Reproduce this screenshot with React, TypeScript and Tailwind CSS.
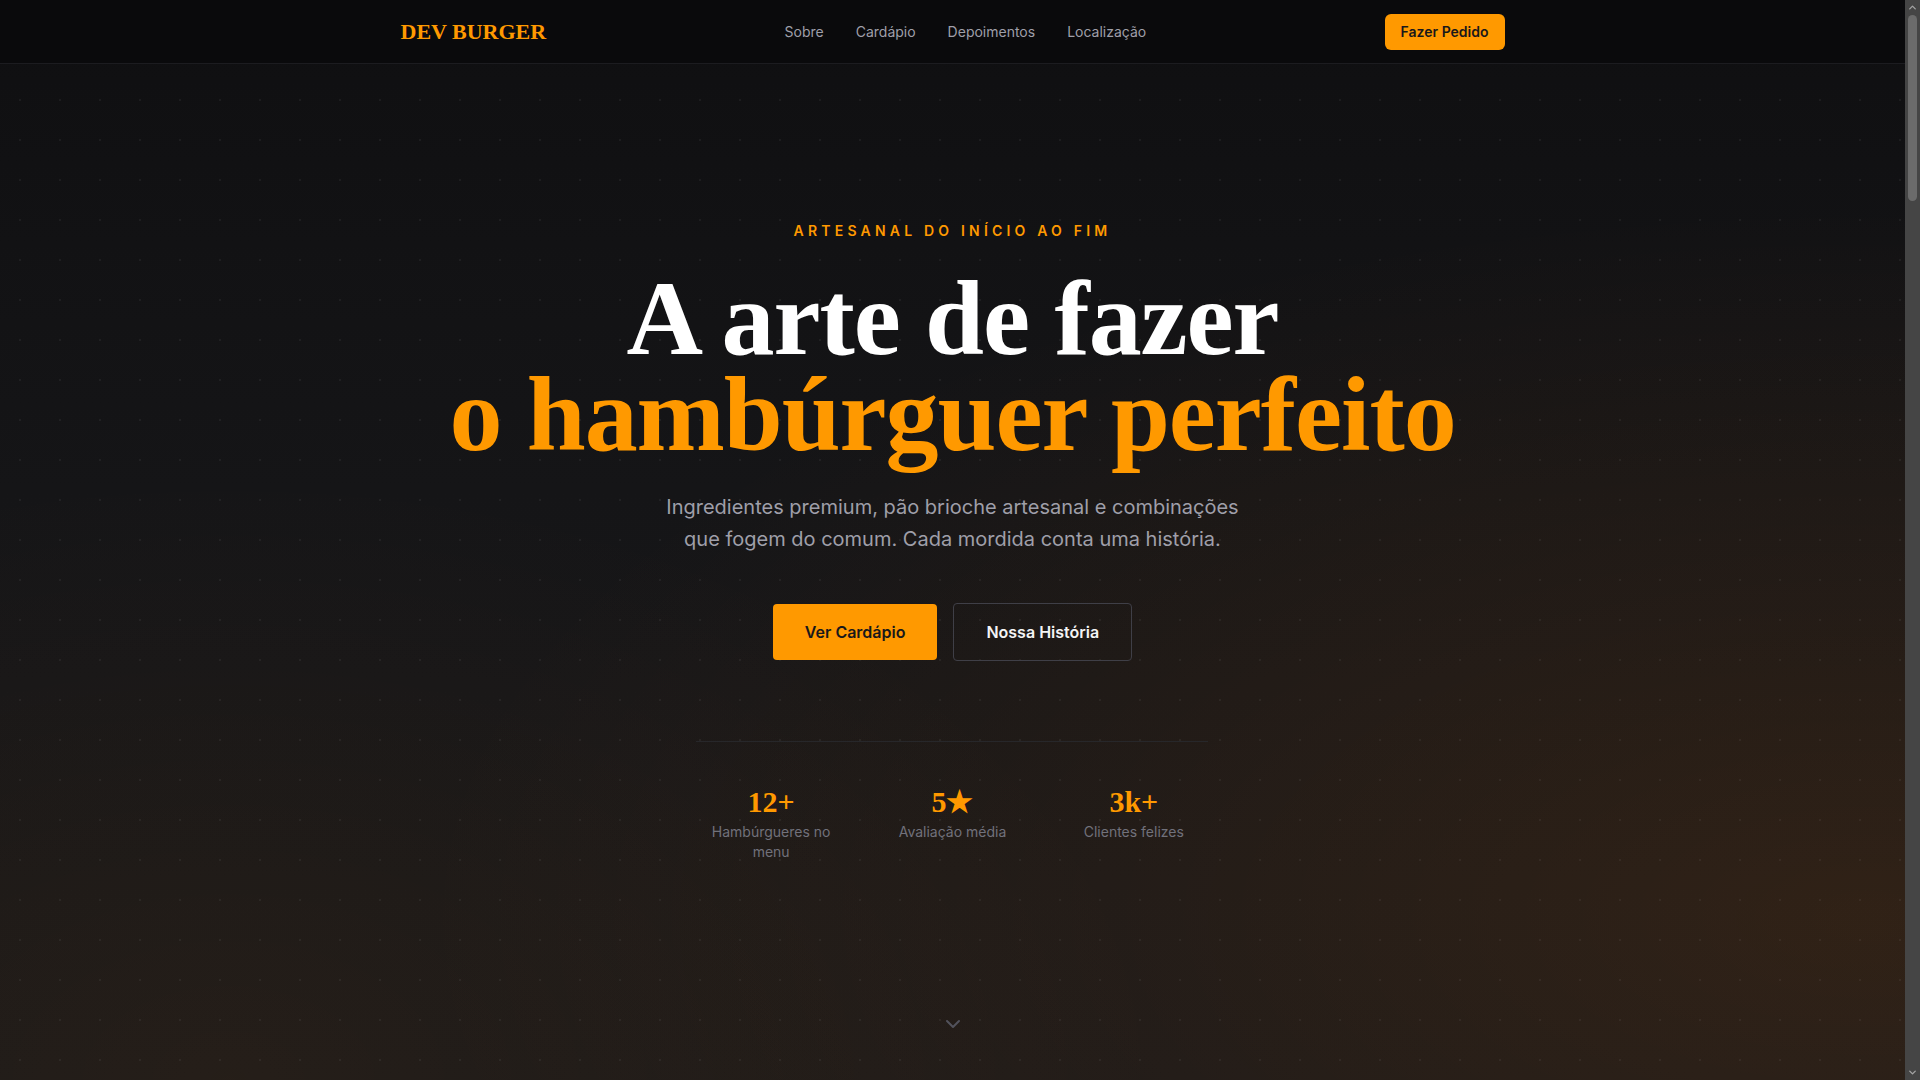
import { ChevronDown, ChevronUp } from 'lucide-react';

const navLinks = ['Sobre', 'Cardápio', 'Depoimentos', 'Localização'];

const stats = [
  { value: '12+', label: 'Hambúrgueres no menu' },
  { value: '5★', label: 'Avaliação média' },
  { value: '3k+', label: 'Clientes felizes' },
];

function Navbar() {
  return (
    <nav className="sticky top-0 z-50 h-16 bg-[#0a0a0c] border-b border-[#1c1c20]">
      <div className="max-w-6xl mx-auto px-6 h-full flex items-center justify-between">
        <div className="font-['Liberation_Serif',serif] font-bold text-[22px] text-[#ff9900]">
          DEV BURGER
        </div>
        <ul className="flex items-center gap-8 text-sm text-zinc-400">
          {navLinks.map((link) => (
            <li key={link}>
              <a href="#" className="hover:text-white transition-colors">
                {link}
              </a>
            </li>
          ))}
        </ul>
        <button className="px-4 py-2 rounded-md bg-[#ff9900] text-sm font-semibold text-zinc-900 hover:bg-[#ffaa22] transition-colors">
          Fazer Pedido
        </button>
      </div>
    </nav>
  );
}

function Hero() {
  return (
    <section className="relative -mt-16 min-h-screen flex items-center justify-center overflow-hidden bg-[#141416]">
      {/* fundo: gradiente + brilhos + pontos */}
      <div className="absolute inset-0 bg-[linear-gradient(180deg,#0f0f11_0%,#151517_45%,#18181a_100%)]" />
      <div className="absolute inset-0 bg-[radial-gradient(ellipse_at_98%_85%,rgba(255,120,0,0.11),transparent_55%)]" />
      <div className="absolute inset-0 bg-[radial-gradient(ellipse_at_12%_100%,rgba(255,130,0,0.06),transparent_40%)]" />
      <div className="absolute inset-0 bg-[radial-gradient(circle,rgba(255,255,255,0.05)_1px,transparent_1.5px)] bg-[size:40px_40px]" />

      <div className="relative flex flex-col items-center text-center px-6 pt-[3px]">
        <p className="text-sm font-semibold tracking-[0.3em] text-[#ff9900] mb-[30px]">
          ARTESANAL DO INÍCIO AO FIM
        </p>
        <h1 className="font-['Liberation_Serif',serif] font-bold text-[106px] leading-[96px] tracking-[-0.01em]">
          <span className="block text-white">A arte de fazer</span>
          <span className="block text-[#ff9900]">o hambúrguer perfeito</span>
        </h1>
        <p className="mt-[28px] max-w-xl text-xl leading-8 text-zinc-400">
          Ingredientes premium, pão brioche artesanal e combinações que fogem do comum. Cada mordida conta uma história.
        </p>
        <div className="mt-12 flex items-center gap-4">
          <a href="#" className="px-8 py-4 rounded bg-[#ff9900] text-base font-semibold text-zinc-900 hover:bg-[#ffaa22] transition-colors">
            Ver Cardápio
          </a>
          <a href="#" className="px-8 py-4 rounded border border-zinc-700 text-base font-semibold text-zinc-100 hover:border-zinc-500 transition-colors">
            Nossa História
          </a>
        </div>
        <div className="mt-20 w-full max-w-lg border-t border-zinc-800 pt-[42px] grid grid-cols-3 gap-8">
          {stats.map((s) => (
            <div key={s.label} className="flex flex-col items-center">
              <span className="font-['Liberation_Serif',serif] font-bold text-3xl text-[#ff9900]">
                {s.value}
              </span>
              <span className="mt-[2px] text-sm text-zinc-500">{s.label}</span>
            </div>
          ))}
        </div>
      </div>

      <div className="absolute bottom-11 left-1/2 -translate-x-1/2 text-zinc-600">
        <ChevronDown size={24} />
      </div>
    </section>
  );
}

function About() {
  return (
    <section className="bg-[#0f0f11] py-32">
      <div className="max-w-6xl mx-auto px-6 grid grid-cols-2 gap-16">
        <div>
          <p className="text-sm font-semibold tracking-[0.3em] text-[#ff9900]">SOBRE NÓS</p>
          <h2 className="mt-4 font-['Liberation_Serif',serif] font-bold text-5xl text-white">
            Feito à mão, todos os dias
          </h2>
        </div>
        <p className="text-lg leading-8 text-zinc-400">
          Desde a primeira chapa acesa, acreditamos que um bom hambúrguer começa na escolha dos ingredientes.
          Moemos nossa carne diariamente e assamos nosso próprio pão brioche.
        </p>
      </div>
    </section>
  );
}

// barra de rolagem escura (como no navegador)
function ScrollTrack() {
  return (
    <aside className="w-[15px] h-screen shrink-0 bg-[#454545] flex flex-col items-center text-[#a3a3a3]">
      <ChevronUp size={11} strokeWidth={3} className="mt-[2px]" />
      <div className="mt-[2px] w-[9px] h-[186px] rounded-full bg-[#6b6b6b]" />
      <div className="flex-1" />
      <ChevronDown size={11} strokeWidth={3} className="mb-[2px]" />
    </aside>
  );
}

export default function App() {
  return (
    <div className="flex h-screen overflow-hidden bg-[#0f0f11] font-['Inter',sans-serif]">
      <main className="flex-1 min-w-0 h-screen overflow-y-auto [scrollbar-width:none]">
        <Navbar />
        <Hero />
        <About />
      </main>
      <ScrollTrack />
    </div>
  );
}
